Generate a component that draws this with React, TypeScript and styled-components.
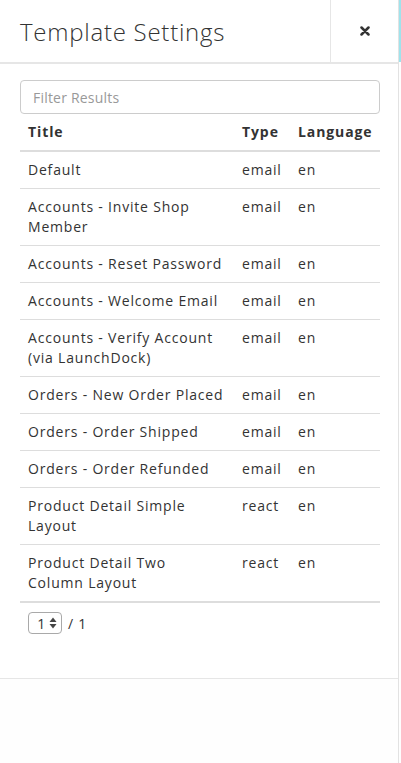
import React from 'react'
import styled, { createGlobalStyle } from 'styled-components'

const GlobalStyle = createGlobalStyle`
  html, body {
    margin: 0;
    padding: 0;
    background: #fefefe;
  }
  body {
    font-family: 'Open Sans', 'Liberation Sans', sans-serif;
    color: #333;
  }
`

type Template = { title: string; type: string; language: string }

const templates: Template[] = [
  { title: 'Default', type: 'email', language: 'en' },
  { title: 'Accounts - Invite Shop Member', type: 'email', language: 'en' },
  { title: 'Accounts - Reset Password', type: 'email', language: 'en' },
  { title: 'Accounts - Welcome Email', type: 'email', language: 'en' },
  { title: 'Accounts - Verify Account (via LaunchDock)', type: 'email', language: 'en' },
  { title: 'Orders - New Order Placed', type: 'email', language: 'en' },
  { title: 'Orders - Order Shipped', type: 'email', language: 'en' },
  { title: 'Orders - Order Refunded', type: 'email', language: 'en' },
  { title: 'Product Detail Simple Layout', type: 'react', language: 'en' },
  { title: 'Product Detail Two Column Layout', type: 'react', language: 'en' },
]

export default function App() {
  return (
    <>
      <GlobalStyle />
      <Page>
        <Panel>
          <Header>
            <Title>Template Settings</Title>
            <CloseButton aria-label="Close">
              <svg width="10" height="10" viewBox="0 0 10 10">
                <path
                  d="M1.5 1.5 L8.5 8.5 M8.5 1.5 L1.5 8.5"
                  stroke="#333"
                  strokeWidth="2.5"
                  strokeLinecap="round"
                />
              </svg>
            </CloseButton>
          </Header>
          <Body>
            <FilterInput placeholder="Filter Results" />
            <Table>
              <colgroup>
                <col style={{ width: 214 }} />
                <col style={{ width: 56 }} />
                <col />
              </colgroup>
              <thead>
                <tr>
                  <Th>Title</Th>
                  <Th>Type</Th>
                  <Th>Language</Th>
                </tr>
              </thead>
              <tbody>
                {templates.map((t) => (
                  <tr key={t.title}>
                    <Td>{t.title}</Td>
                    <Td>{t.type}</Td>
                    <Td>{t.language}</Td>
                  </tr>
                ))}
              </tbody>
            </Table>
            <Pager>
              <PageSelect>
                <span>1</span>
                <svg width="8" height="12" viewBox="0 0 8 12">
                  <path d="M4 0.5 L7.5 5 L0.5 5 Z" fill="#444" />
                  <path d="M4 11.5 L7.5 7 L0.5 7 Z" fill="#444" />
                </svg>
              </PageSelect>
              <span>/ 1</span>
            </Pager>
          </Body>
          <Footer />
        </Panel>
        <Accent />
      </Page>
    </>
  )
}

const Page = styled.div`
  display: flex;
  align-items: flex-start;
  height: 763px;
  background: #fefefe;
`

const Panel = styled.div`
  width: 398px;
  height: 763px;
  display: flex;
  flex-direction: column;
  background: #fff;
  border-right: 1px solid #e2e2e2;
`

const Accent = styled.div`
  width: 2px;
  height: 62px;
  background: #9fe3ec;
`

const Header = styled.div`
  height: 62px;
  display: flex;
  border-bottom: 2px solid #e6e6e6;
  flex-shrink: 0;
`

const Title = styled.h1`
  flex: 1;
  margin: 0;
  padding: 0 0 0 20px;
  display: flex;
  align-items: center;
  font-size: 24px;
  font-weight: 300;
  color: #333;
  letter-spacing: 0.75px;
`

const CloseButton = styled.button`
  width: 68px;
  border: none;
  border-left: 1px solid #e6e6e6;
  background: transparent;
  display: flex;
  align-items: center;
  justify-content: center;
  padding: 0 0 0 1px;
  cursor: pointer;
`

const Body = styled.div`
  height: 614px;
  padding: 16px 18px 0 20px;
  box-sizing: border-box;
  flex-shrink: 0;
`

const FilterInput = styled.input`
  display: block;
  width: 100%;
  height: 34px;
  box-sizing: border-box;
  padding: 6px 12px;
  border: 1px solid #ccc;
  border-radius: 4px;
  font-family: 'Open Sans', 'Liberation Sans', sans-serif;
  font-size: 14px;
  letter-spacing: 0.2px;
  color: #555;
  outline: none;

  &::placeholder {
    color: #999;
  }
`

const Table = styled.table`
  width: 100%;
  table-layout: fixed;
  border-collapse: collapse;
  border-bottom: 2px solid #ddd;
  font-size: 14px;
  line-height: 20px;
`

const Th = styled.th`
  text-align: left;
  padding: 8px;
  font-weight: 700;
  letter-spacing: 0.9px;
  border-bottom: 2px solid #ddd;
  white-space: nowrap;
`

const Td = styled.td`
  padding: 8px;
  vertical-align: top;
  letter-spacing: 0.8px;
  border-top: 1px solid #ddd;
`

const Pager = styled.div`
  display: flex;
  align-items: center;
  gap: 6px;
  padding: 9px 8px 0;
  font-size: 14px;
  letter-spacing: 0.8px;
`

const PageSelect = styled.div`
  width: 34px;
  height: 22px;
  box-sizing: border-box;
  border: 1px solid #a9a9a9;
  border-radius: 4px;
  display: flex;
  align-items: center;
  justify-content: flex-end;
  gap: 3px;
  padding-right: 4px;
  font-size: 14px;
`

const Footer = styled.div`
  flex: 1;
  border-top: 1px solid #e6e6e6;
  background: #fefefe;
`
